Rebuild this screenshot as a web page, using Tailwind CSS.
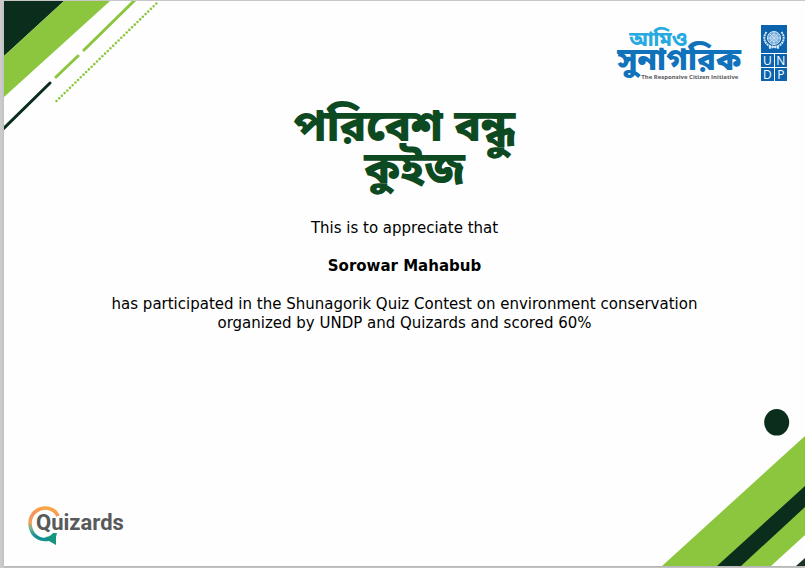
<!DOCTYPE html>
<html lang="en">
<head>
<meta charset="utf-8">
<title>Certificate</title>
<meta name="viewport" content="width=device-width, initial-scale=1">
<script src="https://cdn.jsdelivr.net/npm/@tailwindcss/browser@4"></script>
</head>
<body class="flex min-h-screen flex-col bg-[#cbcbcb] pt-px pb-0.5 pl-1 font-['DejaVu_Sans',sans-serif] text-black">
<main class="relative flex grow flex-col overflow-hidden bg-[#fefefe] shadow">
  <svg class="absolute top-0 left-0" width="160" height="132" viewBox="0 0 160 132" aria-hidden="true">
    <path d="M0 0H60L0 55Z" fill="#0a2d1c"/>
    <path d="M60 0H106L0 96V55Z" fill="#8cc63f"/>
    <g fill="none" stroke-width="3" stroke-linecap="round">
      <path d="M-2 129L46 82" stroke="#0a2d1c"/>
      <path d="M52 76L74 55M80 49L131 -1" stroke="#8cc63f"/>
      <path d="M52.500 100L155 0" stroke="#8cc63f" stroke-width="2.600" stroke-dasharray="0 3.770"/>
    </g>
  </svg>
  <svg class="absolute right-0 bottom-0" width="150" height="165" viewBox="0 0 150 165" aria-hidden="true">
    <ellipse cx="121.700" cy="21.300" rx="12.500" ry="13.300" fill="#0a2d1c"/>
    <path d="M7 165L150 35V134L116 165Z" fill="#8cc63f"/>
    <path d="M62 165L150 85V106L86 165Z" fill="#0a2d1c"/>
    <path d="M141 165L150 157V165Z" fill="#1b3320"/>
  </svg>

  <header class="flex h-20 items-start justify-end gap-5 pt-6 pr-4.5">
    <div class="flex flex-col pt-1 font-['Noto_Sans_Bengali','Noto_Sans',sans-serif]" lang="bn">
      <span class="pl-3 text-[20px] leading-6 font-extrabold text-[#27aae1]">আমিও</span>
      <span class="text-[31px] leading-5 font-black text-[#1072ba]">সুনাগরিক</span>
      <span class="pl-6 text-[6px] leading-2 font-bold text-[#58595b] font-['Open_Sans',sans-serif]" lang="en">The Responsive Citizen Initiative</span>
    </div>
    <div class="flex w-[26px] flex-col gap-px font-['Open_Sans',sans-serif] text-[12px] leading-[13px] text-white">
      <svg class="h-7 w-full bg-[#0b63ad]" viewBox="0 0 26 28" fill="none" stroke="#d9eaf7" aria-hidden="true">
        <circle cx="13" cy="13" r="6.500" fill="#6fa8d6"/>
        <path d="M6.500 13h13M13 6.500v13M8.500 8.500l9 9M17.500 8.500l-9 9" stroke-width=".7"/>
        <circle cx="13" cy="13" r="3.500" stroke-width=".8"/>
        <path d="M5.500 7C1.500 12 3 19 10 21.500M20.500 7C24.500 12 23 19 16 21.500M8 23l10-2M18 23L8 21" stroke-width="2" stroke-dasharray="2 .6"/>
      </svg>
      <div class="grid grid-cols-2 gap-px text-center">
        <span class="bg-[#0b63ad]">U</span><span class="bg-[#0b63ad]">N</span>
        <span class="bg-[#0b63ad]">D</span><span class="bg-[#0b63ad]">P</span>
      </div>
    </div>
  </header>

  <section class="flex flex-col items-center text-center text-[15px] leading-[19px]">
    <h1 class="mt-7 flex flex-col font-['Noto_Sans_Bengali','Noto_Sans',sans-serif] text-[44px] leading-[42px] font-black text-[#0d4a22]" lang="bn"><span>পরিবেশ বন্ধু</span><span class="pl-5">কুইজ</span></h1>
    <p class="mt-[26px]">This is to appreciate that</p>
    <p class="mt-[19px] font-bold">Sorowar Mahabub</p>
    <p class="mt-[19px] max-w-[640px]">has participated in the Shunagorik Quiz Contest on environment conservation organized by UNDP and Quizards and scored 60%</p>
  </section>

  <footer class="mt-auto flex items-center pb-5 pl-6">
    <svg class="h-[42px] w-9" viewBox="0 0 36 42" fill="none" aria-hidden="true">
      <defs><linearGradient id="ring" gradientUnits="userSpaceOnUse" x1="22" y1="0" x2="14" y2="40"><stop offset="0" stop-color="#fbb03b"/><stop offset=".3" stop-color="#f6925a"/><stop offset=".55" stop-color="#f0a35a"/><stop offset=".68" stop-color="#6fb58c"/><stop offset=".85" stop-color="#128a9b"/><stop offset="1" stop-color="#18a078"/></linearGradient></defs>
      <path d="M30 12C27 5 19 2.500 12 5C4 8 0 16 3 25C5.500 33 13 37 21 35" stroke="url(#ring)" stroke-width="3.600"/>
      <path d="M17 33Q22 33 25 29H29L28 33V41L21 37Z" fill="#14967f"/>
    </svg>
    <span class="-ml-7 pb-1 font-['Roboto',sans-serif] text-[22px] leading-7 font-bold text-[#58595b]">Quizards</span>
  </footer>
</main>
</body>
</html>
